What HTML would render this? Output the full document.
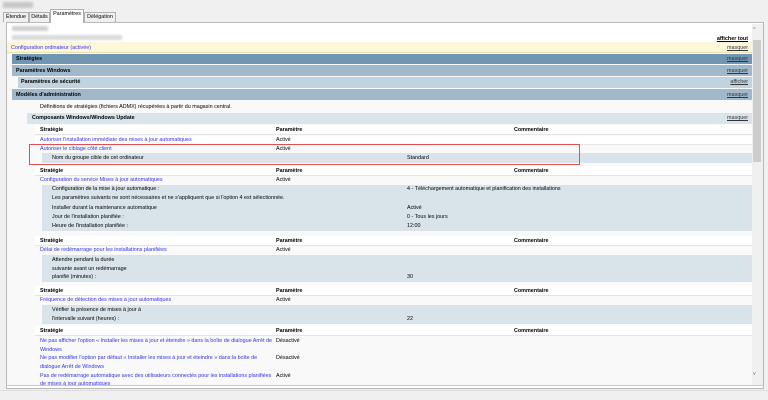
<!DOCTYPE html>
<html><head><meta charset="utf-8"><style>
*{margin:0;padding:0;box-sizing:border-box}
body{width:768px;height:400px;background:#f0f0f0;font-family:"Liberation Sans",sans-serif;font-size:5.4px;color:#000;position:relative;overflow:hidden}
.a{position:absolute;white-space:nowrap;line-height:8px}
.r{position:absolute}
.b{font-weight:bold}
.l{color:#3333ee}
.m{position:absolute;right:20px;text-decoration:underline;color:#333;line-height:8px}
.tab{position:absolute;top:12px;height:10px;border:1px solid #b0b0b0;border-bottom:none;background:#f0f0f0;font-size:5.4px;line-height:8px;text-align:center}
</style></head><body>
<div class="r" style="left:3px;top:2px;width:30px;height:6px;background:#c8c8c8;filter:blur(1px)"></div>
<div class="tab" style="left:3px;width:26px">Étendue</div>
<div class="tab" style="left:29px;width:21px">Détails</div>
<div class="tab" style="left:84px;width:32px">Délégation</div>
<div class="r" style="left:6px;top:22px;width:758px;height:367px;border:1px solid #b8b8b8;background:#fff"></div>
<div class="tab" style="left:50px;top:9px;width:34px;height:14px;background:#fff;border-color:#b0b0b0">Paramètres</div>
<div class="r" style="left:7px;top:24px;width:745px;height:361px;background:#f9f9f9"></div>
<div class="r" style="left:7px;top:24px;width:745px;height:18px;background:#fff"></div>
<div class="r" style="left:12px;top:26px;width:36px;height:5px;background:#d0d0d0;filter:blur(1px)"></div>
<div class="r" style="left:12px;top:35px;width:110px;height:5px;background:#dadada;filter:blur(1px)"></div>
<div class="a b" style="right:20px;top:35px;text-decoration:underline">afficher tout</div>
<div class="r" style="left:752px;top:24px;width:11px;height:361px;background:#f0f0f0"></div>
<div class="r" style="left:753px;top:40px;width:8px;height:122px;background:#cdcdcd"></div>
<div class="a" style="left:753px;top:26px;color:#777">^</div>
<div class="a" style="left:753px;top:370px;color:#777">v</div>

<div class="r" style="left:7px;top:42px;width:745px;height:11px;background:#fdf7d9;border-bottom:1px solid #e8dfb0"></div>
<div class="a l" style="left:11px;top:44px">Configuration ordinateur (activée)</div><div class="m" style="top:44px">masquer</div>
<div class="r" style="left:12px;top:54px;width:740px;height:10px;background:#7196b3"></div>
<div class="a b" style="left:16px;top:55px">Stratégies</div><div class="m" style="top:55px">masquer</div>
<div class="r" style="left:12px;top:65px;width:740px;height:11px;background:#a1b8cb"></div>
<div class="a b" style="left:16px;top:67px">Paramètres Windows</div><div class="m" style="top:67px">masquer</div>
<div class="r" style="left:18px;top:77px;width:734px;height:11px;background:#c1d3df"></div>
<div class="a b" style="left:21px;top:78px">Paramètres de sécurité</div><div class="m" style="top:78px">afficher</div>
<div class="r" style="left:12px;top:89px;width:740px;height:11px;background:#a1b8cb"></div>
<div class="a b" style="left:16px;top:91px">Modèles d'administration</div><div class="m" style="top:91px">masquer</div>
<div class="a" style="left:40px;top:103px">Définitions de stratégies (fichiers ADMX) récupérées à partir du magasin central.</div>
<div class="r" style="left:27px;top:113px;width:725px;height:11px;background:#d9e4eb"></div>
<div class="a b" style="left:32px;top:114px">Composants Windows/Windows Update</div><div class="m" style="top:114px">masquer</div>

<div class="r" style="left:35px;top:125px;width:717px;height:10px;background:#fff;border-bottom:1px solid #e4e4e4"></div>
<div class="a b" style="left:40px;top:126px">Stratégie</div><div class="a b" style="left:276px;top:126px">Paramètre</div><div class="a b" style="left:514px;top:126px">Commentaire</div>
<div class="r" style="left:35px;top:136px;width:717px;height:9px;background:#fff;border-bottom:1px solid #e4e4e4"></div>
<div class="a l" style="left:40px;top:136px">Autoriser l'installation immédiate des mises à jour automatiques</div><div class="a" style="left:276px;top:136px">Activé</div>
<div class="a l" style="left:40px;top:145px">Autoriser le ciblage côté client</div><div class="a" style="left:276px;top:145px">Activé</div>
<div class="r" style="left:42px;top:153px;width:710px;height:10px;background:#d9e3ea"></div>
<div class="a" style="left:52px;top:154px">Nom du groupe cible de cet ordinateur</div><div class="a" style="left:407px;top:154px">Standard</div>
<div class="r" style="left:29px;top:144px;width:551px;height:21px;border:1.5px solid #e05050"></div>

<div class="r" style="left:35px;top:166px;width:717px;height:10px;background:#fff;border-bottom:1px solid #e4e4e4"></div>
<div class="a b" style="left:40px;top:167px">Stratégie</div><div class="a b" style="left:276px;top:167px">Paramètre</div><div class="a b" style="left:514px;top:167px">Commentaire</div>
<div class="a l" style="left:40px;top:176px">Configuration du service Mises à jour automatiques</div><div class="a" style="left:276px;top:176px">Activé</div>
<div class="r" style="left:42px;top:185px;width:710px;height:46px;background:#d9e3ea"></div>
<div class="a" style="left:52px;top:185px">Configuration de la mise à jour automatique :</div><div class="a" style="left:407px;top:185px">4 - Téléchargement automatique et planification des installations</div>
<div class="a" style="left:52px;top:194px">Les paramètres suivants ne sont nécessaires et ne s'appliquent que si l'option 4 est sélectionnée.</div>
<div class="a" style="left:52px;top:204px">Installer durant la maintenance automatique</div><div class="a" style="left:407px;top:204px">Activé</div>
<div class="a" style="left:52px;top:213px">Jour de l'installation planifiée :</div><div class="a" style="left:407px;top:213px">0 - Tous les jours</div>
<div class="a" style="left:52px;top:222px">Heure de l'installation planifiée :</div><div class="a" style="left:407px;top:222px">12:00</div>

<div class="r" style="left:35px;top:236px;width:717px;height:10px;background:#fff;border-bottom:1px solid #e4e4e4"></div>
<div class="a b" style="left:40px;top:237px">Stratégie</div><div class="a b" style="left:276px;top:237px">Paramètre</div><div class="a b" style="left:514px;top:237px">Commentaire</div>
<div class="a l" style="left:40px;top:246px">Délai de redémarrage pour les installations planifiées</div><div class="a" style="left:276px;top:246px">Activé</div>
<div class="r" style="left:42px;top:255px;width:710px;height:27px;background:#d9e3ea"></div>
<div class="a" style="left:52px;top:256px">Attendre pendant la durée</div>
<div class="a" style="left:52px;top:265px">suivante avant un redémarrage</div>
<div class="a" style="left:52px;top:273px">planifié (minutes) :</div><div class="a" style="left:407px;top:273px">30</div>

<div class="r" style="left:35px;top:286px;width:717px;height:10px;background:#fff;border-bottom:1px solid #e4e4e4"></div>
<div class="a b" style="left:40px;top:287px">Stratégie</div><div class="a b" style="left:276px;top:287px">Paramètre</div><div class="a b" style="left:514px;top:287px">Commentaire</div>
<div class="a l" style="left:40px;top:296px">Fréquence de détection des mises à jour automatiques</div><div class="a" style="left:276px;top:296px">Activé</div>
<div class="r" style="left:42px;top:305px;width:710px;height:19px;background:#d9e3ea"></div>
<div class="a" style="left:52px;top:306px">Vérifier la présence de mises à jour à</div>
<div class="a" style="left:52px;top:315px">l'intervalle suivant (heures) :</div><div class="a" style="left:407px;top:315px">22</div>

<div class="r" style="left:35px;top:326px;width:717px;height:10px;background:#fff;border-bottom:1px solid #e4e4e4"></div>
<div class="a b" style="left:40px;top:327px">Stratégie</div><div class="a b" style="left:276px;top:327px">Paramètre</div><div class="a b" style="left:514px;top:327px">Commentaire</div>
<div class="a l" style="left:40px;top:337px">Ne pas afficher l'option « Installer les mises à jour et éteindre » dans la boîte de dialogue Arrêt de</div><div class="a" style="left:276px;top:337px">Désactivé</div>
<div class="a l" style="left:40px;top:346px">Windows</div>
<div class="a l" style="left:40px;top:354px">Ne pas modifier l'option par défaut « Installer les mises à jour et éteindre » dans la boîte de</div><div class="a" style="left:276px;top:354px">Désactivé</div>
<div class="a l" style="left:40px;top:363px">dialogue Arrêt de Windows</div>
<div class="a l" style="left:40px;top:372px">Pas de redémarrage automatique avec des utilisateurs connectés pour les installations planifiées</div><div class="a" style="left:276px;top:372px">Activé</div>
<div class="a l" style="left:40px;top:380px;height:5px;overflow:hidden">de mises à jour automatiques</div>
<div class="r" style="left:6px;top:385px;width:758px;height:1px;background:#c8c8c8"></div>
<div class="r" style="left:0;top:390px;width:768px;height:10px;background:#f0f0f0;border-top:1px solid #ddd"></div>
</body></html>
